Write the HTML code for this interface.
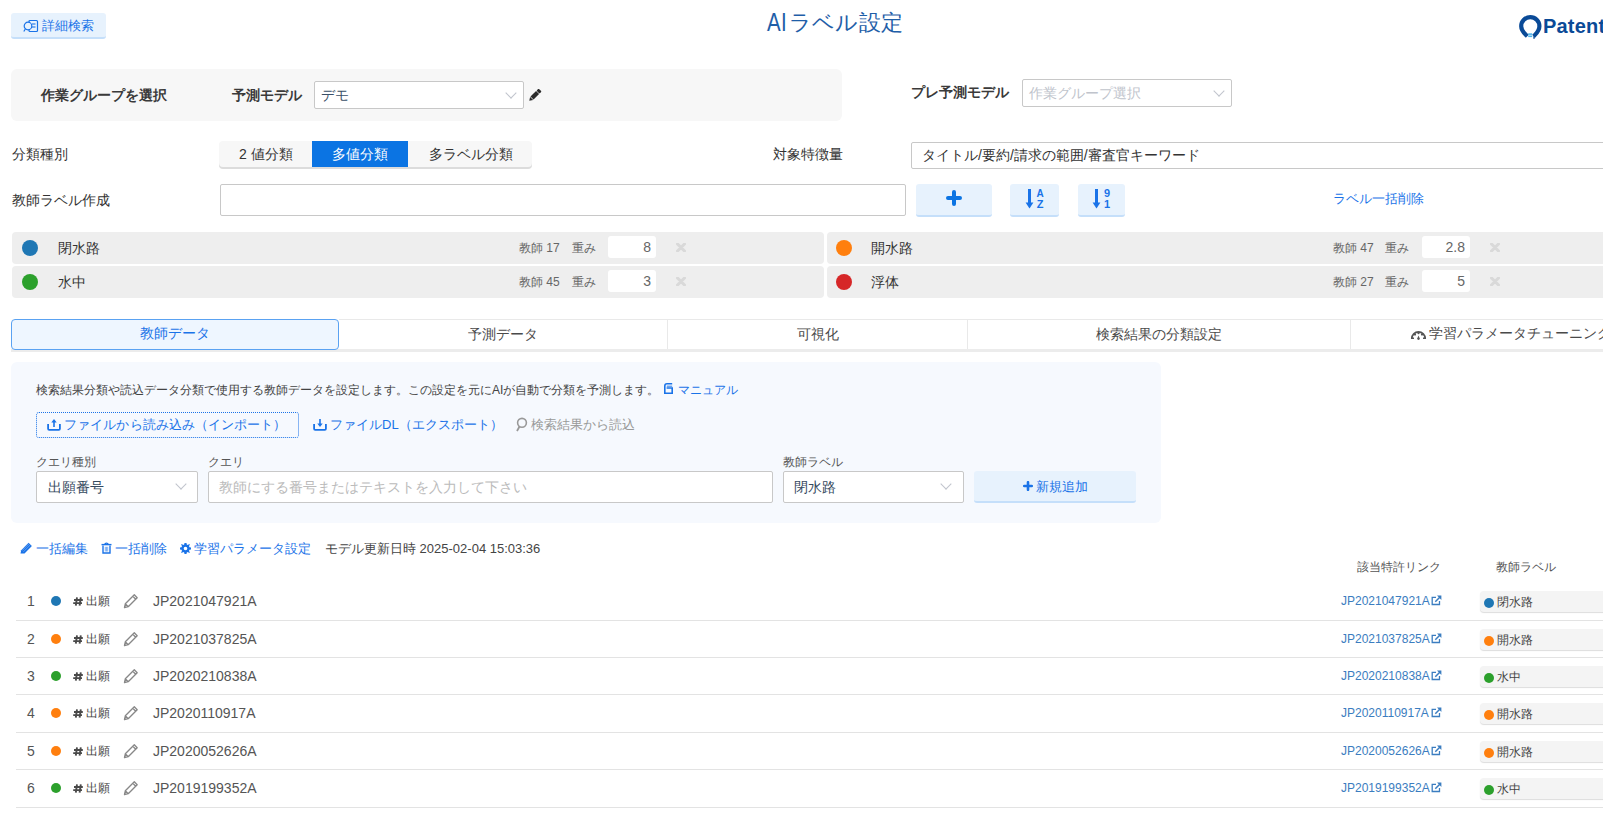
<!DOCTYPE html>
<html><head><meta charset="utf-8">
<style>
*{box-sizing:border-box;margin:0;padding:0}
html,body{width:1603px;height:815px;overflow:hidden;background:#fff}
body{position:relative;font-family:"Liberation Sans",sans-serif;font-size:14px;color:#333;line-height:1}
.a{position:absolute;white-space:nowrap}
.btnl{background:#e7f2fd;border-bottom:2px solid #c5dffa;border-radius:3px}
.sel{background:#fff;border:1px solid #c8c8c8;border-radius:2px}
.chev{position:absolute;width:8px;height:8px;border-right:1px solid #c0c4cc;border-bottom:1px solid #c0c4cc;transform:rotate(45deg)}
.card{position:absolute;height:31px;background:#eee;border-radius:4px}
.dot{position:absolute;border-radius:50%}
.blue{color:#1a73e8}
.tab{position:absolute;top:319px;height:30px;border-top:1px solid #e9e9e9;border-right:1px solid #e9e9e9;text-align:center;line-height:28px;color:#4a4a4a}
.row{position:absolute;left:16px;width:1600px;border-bottom:1px solid #e3e3e3}
</style></head><body>

<!-- top button -->
<div class="a btnl" style="left:11px;top:13px;width:95px;height:26px"></div>
<svg class="a" style="left:23px;top:19px" width="16" height="14" viewBox="0 0 16 14"><rect x="6" y="1.5" width="8.5" height="11" rx="1" fill="none" stroke="#1a73e8" stroke-width="1.2"/><line x1="9" y1="5" x2="12.5" y2="5" stroke="#1a73e8" stroke-width="1.1"/><line x1="9" y1="8" x2="12.5" y2="8" stroke="#1a73e8" stroke-width="1.1"/><circle cx="5" cy="7" r="3.8" fill="#e7f2fd" stroke="#1a73e8" stroke-width="1.2"/><line x1="2.3" y1="10" x2="0.8" y2="12.5" stroke="#1a73e8" stroke-width="1.2"/></svg>
<div class="a blue" style="left:42px;top:19px;font-size:13px">詳細検索</div>

<div class="a" style="left:767px;top:12px;font-size:22px;color:#1f5ea8;letter-spacing:0.4px"><span style="display:inline-block;transform:translateY(1px) scale(0.93,1.18);transform-origin:0 78%">AI</span>ラベル設定</div>

<!-- logo -->
<svg class="a" style="left:1510px;top:8px" width="36" height="36" viewBox="0 0 36 36"><path d="M17.3 28.3 C 14.5 25.5, 11.2 23, 11.2 18.2 A 9.1 9.1 0 1 1 29.4 18.2 C 29.4 23, 26.2 25.5, 23.6 28.3" fill="none" stroke="#0a4a97" stroke-width="4.2"/><rect x="18.2" y="25.3" width="4" height="1.6" fill="#4db3ea"/><rect x="18.2" y="27.5" width="4" height="1.6" fill="#4db3ea"/><path d="M24.2 27 L24 30.8" stroke="#0a4a97" stroke-width="1.4"/></svg>
<div class="a" style="left:1543px;top:16px;font-size:20px;font-weight:bold;color:#0a4a97;letter-spacing:0.2px">Patent</div>
<!-- panel 1 -->
<div class="a" style="left:11px;top:69px;width:831px;height:52px;background:#f7f7f7;border-radius:6px"></div>
<div class="a" style="left:41px;top:87.5px;font-weight:bold;color:#3a3a3a">作業グループを選択</div>
<div class="a" style="left:232px;top:87.5px;font-weight:bold;color:#3a3a3a">予測モデル</div>
<div class="a sel" style="left:314px;top:81px;width:210px;height:28px"></div>
<div class="a" style="left:321px;top:88px;color:#3a5068">デモ</div>
<div class="chev" style="left:507px;top:89px"></div>
<svg class="a" style="left:528px;top:88.5px" width="14" height="14" viewBox="0 0 15 15"><g transform="rotate(-45 7 7)" fill="#2b2b2b"><path d="M-1 7 L2.6 4.7 V9.3 Z"/><rect x="3.2" y="4.7" width="8.4" height="4.6"/><rect x="12.2" y="4.7" width="3.2" height="4.6" rx="1"/></g></svg>

<div class="a" style="left:911px;top:85px;font-weight:bold;color:#3a3a3a">プレ予測モデル</div>
<div class="a sel" style="left:1022px;top:79px;width:210px;height:28px"></div>
<div class="a" style="left:1029px;top:86px;color:#c0c4cc">作業グループ選択</div>
<div class="chev" style="left:1215px;top:87px"></div>

<!-- row 2 -->
<div class="a" style="left:12px;top:147px">分類種別</div>
<div class="a" style="left:219px;top:141px;width:313px;height:26px;background:#f7f7f7;border-radius:4px;box-shadow:0 2px 0 #dcdcdc"></div>
<div class="a" style="left:312px;top:141px;width:96px;height:26px;background:#0b74e3"></div>
<div class="a" style="left:239px;top:147px">2 値分類</div>
<div class="a" style="left:332px;top:147px;color:#fff">多値分類</div>
<div class="a" style="left:429px;top:147px">多ラベル分類</div>

<div class="a" style="left:773px;top:147px">対象特徴量</div>
<div class="a sel" style="left:911px;top:142px;width:720px;height:27px"></div>
<div class="a" style="left:922px;top:148px">タイトル/要約/請求の範囲/審査官キーワード</div>

<!-- row 3 -->
<div class="a" style="left:12px;top:193px">教師ラベル作成</div>
<div class="a sel" style="left:220px;top:184px;width:686px;height:32px"></div>
<div class="a btnl" style="left:916px;top:184px;width:76px;height:33px"></div>
<svg class="a" style="left:946px;top:190px" width="16" height="16" viewBox="0 0 16 16"><path d="M8 2 V14 M2 8 H14" stroke="#0b74e3" stroke-width="4" stroke-linecap="round"/></svg>
<div class="a btnl" style="left:1010px;top:184px;width:49px;height:33px"></div>
<svg class="a" style="left:1020px;top:186px" width="28" height="26" viewBox="0 0 28 26"><path d="M9.5 3 V19" stroke="#1a73e8" stroke-width="3"/><path d="M5.6 16.5 L9.5 22.5 L13.4 16.5 Z" fill="#1a73e8"/><text x="20" y="10.5" font-size="10" font-weight="bold" fill="#1a73e8" text-anchor="middle" font-family="Liberation Sans">A</text><text x="20" y="22" font-size="11" font-weight="bold" fill="#1a73e8" text-anchor="middle" font-family="Liberation Sans">Z</text></svg>
<div class="a btnl" style="left:1078px;top:184px;width:47px;height:33px"></div>
<svg class="a" style="left:1087px;top:186px" width="28" height="26" viewBox="0 0 28 26"><path d="M9.5 3 V19" stroke="#1a73e8" stroke-width="3"/><path d="M5.6 16.5 L9.5 22.5 L13.4 16.5 Z" fill="#1a73e8"/><text x="20" y="11" font-size="11" font-weight="bold" fill="#1a73e8" text-anchor="middle" font-family="Liberation Sans">9</text><text x="20" y="22" font-size="11" font-weight="bold" fill="#1a73e8" text-anchor="middle" font-family="Liberation Sans">1</text></svg>
<div class="a blue" style="left:1333px;top:191.5px;font-size:13px">ラベル一括削除</div>

<!-- label cards -->
<div class="card" style="left:12px;top:232px;width:812px;height:32px"></div>
<div class="card" style="left:12px;top:266px;width:812px;height:32px"></div>
<div class="card" style="left:827px;top:232px;width:812px;height:32px"></div>
<div class="card" style="left:827px;top:266px;width:812px;height:32px"></div>

<div class="dot" style="left:22px;top:240px;width:16px;height:16px;background:#1f77b4"></div>
<div class="a" style="left:58px;top:241px">閉水路</div>
<div class="dot" style="left:22px;top:274px;width:16px;height:16px;background:#2ca02c"></div>
<div class="a" style="left:58px;top:275px">水中</div>
<div class="dot" style="left:836px;top:240px;width:16px;height:16px;background:#ff7f0e"></div>
<div class="a" style="left:871px;top:241px">開水路</div>
<div class="dot" style="left:836px;top:274px;width:16px;height:16px;background:#d62728"></div>
<div class="a" style="left:871px;top:275px">浮体</div>

<div class="a" style="left:519px;top:242px;font-size:12px;color:#666">教師 17</div>
<div class="a" style="left:572px;top:242px;font-size:12px;color:#666">重み</div>
<div class="a" style="left:608px;top:236px;width:48px;height:22px;background:#fff;border-radius:3px;text-align:right;padding:4px 5px 0 0;color:#666">8</div>
<svg class="a" style="left:676px;top:243px" width="10" height="9" viewBox="0 0 10 9"><path d="M1.5 1 L8.5 8 M8.5 1 L1.5 8" stroke="#d9d9d9" stroke-width="3" stroke-linecap="round"/></svg>
<div class="a" style="left:519px;top:276px;font-size:12px;color:#666">教師 45</div>
<div class="a" style="left:572px;top:276px;font-size:12px;color:#666">重み</div>
<div class="a" style="left:608px;top:270px;width:48px;height:22px;background:#fff;border-radius:3px;text-align:right;padding:4px 5px 0 0;color:#666">3</div>
<svg class="a" style="left:676px;top:277px" width="10" height="9" viewBox="0 0 10 9"><path d="M1.5 1 L8.5 8 M8.5 1 L1.5 8" stroke="#d9d9d9" stroke-width="3" stroke-linecap="round"/></svg>

<div class="a" style="left:1333px;top:242px;font-size:12px;color:#666">教師 47</div>
<div class="a" style="left:1385px;top:242px;font-size:12px;color:#666">重み</div>
<div class="a" style="left:1422px;top:236px;width:48px;height:22px;background:#fff;border-radius:3px;text-align:right;padding:4px 5px 0 0;color:#666">2.8</div>
<svg class="a" style="left:1490px;top:243px" width="10" height="9" viewBox="0 0 10 9"><path d="M1.5 1 L8.5 8 M8.5 1 L1.5 8" stroke="#d9d9d9" stroke-width="3" stroke-linecap="round"/></svg>
<div class="a" style="left:1333px;top:276px;font-size:12px;color:#666">教師 27</div>
<div class="a" style="left:1385px;top:276px;font-size:12px;color:#666">重み</div>
<div class="a" style="left:1422px;top:270px;width:48px;height:22px;background:#fff;border-radius:3px;text-align:right;padding:4px 5px 0 0;color:#666">5</div>
<svg class="a" style="left:1490px;top:277px" width="10" height="9" viewBox="0 0 10 9"><path d="M1.5 1 L8.5 8 M8.5 1 L1.5 8" stroke="#d9d9d9" stroke-width="3" stroke-linecap="round"/></svg>

<!-- tabs -->
<div class="a" style="left:11px;top:349px;width:1600px;height:3px;background:#ececec"></div>
<div class="tab" style="left:339px;width:329px">予測データ</div>
<div class="tab" style="left:668px;width:300px">可視化</div>
<div class="tab" style="left:968px;width:383px">検索結果の分類設定</div>
<div class="tab" style="left:1351px;width:458px"></div>
<svg class="a" style="left:1410px;top:328px" width="17" height="12" viewBox="0 0 17 12"><path d="M1.8 10.5 A6.7 6.7 0 0 1 15.2 10.5" fill="none" stroke="#555" stroke-width="1.8"/><path d="M1 10.3 H4 M13 10.3 H16" stroke="#555" stroke-width="1.6"/><circle cx="8.5" cy="5.2" r="1.1" fill="#555"/><circle cx="5" cy="6.6" r="1.1" fill="#555"/><circle cx="12" cy="6.6" r="1.1" fill="#555"/><path d="M8.5 7.5 L7.2 10.6 A1.3 1.3 0 0 0 9.8 10.6 Z" fill="#555"/></svg>
<div class="a" style="left:1429px;top:326px;color:#4a4a4a">学習パラメータチューニング</div>
<div class="tab" style="left:11px;width:328px;background:#eef6ff;border:1px solid #5aa2f2;border-radius:4px;color:#1a73e8;line-height:27px;height:31px">教師データ</div>

<!-- content panel -->
<div class="a" style="left:11px;top:362px;width:1150px;height:161px;background:#f6f9fe;border-radius:6px"></div>
<div class="a" style="left:36px;top:384px;font-size:12px;color:#444">検索結果分類や読込データ分類で使用する教師データを設定します。この設定を元にAIが自動で分類を予測します。</div>
<div class="a blue" style="left:678px;top:384px;font-size:12px">マニュアル</div>
<svg class="a" style="left:47px;top:419px" width="14" height="12" viewBox="0 0 14 12"><path d="M1.1 5 V9.8 Q1.1 10.9 2.2 10.9 H11.8 Q12.9 10.9 12.9 9.8 V5" fill="none" stroke="#1a73e8" stroke-width="1.8"/><path d="M7 8 V3" stroke="#1a73e8" stroke-width="1.6"/><path d="M4.3 3.6 L7 0 L9.7 3.6 Z" fill="#1a73e8"/></svg>
<svg class="a" style="left:313px;top:419px" width="14" height="12" viewBox="0 0 14 12"><path d="M1.1 5 V9.8 Q1.1 10.9 2.2 10.9 H11.8 Q12.9 10.9 12.9 9.8 V5" fill="none" stroke="#1a73e8" stroke-width="1.8"/><path d="M7 0 V5" stroke="#1a73e8" stroke-width="1.6"/><path d="M4.3 4.5 L7 8 L9.7 4.5 Z" fill="#1a73e8"/></svg>
<svg class="a" style="left:515px;top:417px" width="13" height="15" viewBox="0 0 13 15"><circle cx="7" cy="5.8" r="4.4" fill="none" stroke="#999" stroke-width="1.6"/><path d="M4.5 9.5 L2 14" stroke="#999" stroke-width="1.8"/></svg>
<svg class="a" style="left:664px;top:383px" width="9" height="11" viewBox="0 0 9 11"><path d="M8.2 0.8 H3 C1.6 0.8 0.8 1.6 0.8 3 V10.2 H8.2 V5 H2.6" fill="none" stroke="#1a73e8" stroke-width="1.6"/><path d="M2.8 3.2 H8.2" stroke="#1a73e8" stroke-width="0.9"/></svg>

<div class="a" style="left:36px;top:412px;width:263px;height:26px;border:1px dotted #1a73e8;border-radius:3px"></div>
<div class="a blue" style="left:64.3px;top:418px;font-size:13px;letter-spacing:0.05px">ファイルから読み込み（インポート）</div>
<div class="a blue" style="left:330px;top:418px;font-size:13px">ファイルDL（エクスポート）</div>
<div class="a" style="left:531px;top:418px;font-size:13px;color:#999">検索結果から読込</div>

<div class="a" style="left:36px;top:456px;font-size:12px;color:#555">クエリ種別</div>
<div class="a" style="left:208px;top:456px;font-size:12px;color:#555">クエリ</div>
<div class="a" style="left:783px;top:456px;font-size:12px;color:#555">教師ラベル</div>
<div class="a sel" style="left:36px;top:471px;width:162px;height:32px"></div>
<div class="a" style="left:48px;top:480px;color:#34495e">出願番号</div>
<div class="chev" style="left:177px;top:480px"></div>
<div class="a sel" style="left:208px;top:471px;width:565px;height:32px"></div>
<div class="a" style="left:219px;top:480px;color:#bbb">教師にする番号またはテキストを入力して下さい</div>
<div class="a sel" style="left:783px;top:471px;width:181px;height:32px"></div>
<div class="a" style="left:794px;top:480px;color:#34495e">閉水路</div>
<div class="chev" style="left:942px;top:480px"></div>
<div class="a btnl" style="left:974px;top:471px;width:162px;height:32px"></div>
<svg class="a" style="left:1022.5px;top:481px" width="10" height="10" viewBox="0 0 10 10"><path d="M5 1.2 V8.8 M1.2 5 H8.8" stroke="#1a73e8" stroke-width="2.6" stroke-linecap="round"/></svg><div class="a blue" style="left:1036px;top:480px;font-size:13px">新規追加</div>

<!-- toolbar -->

<svg class="a" style="left:20px;top:542px" width="13" height="12" viewBox="0 0 13 12"><path d="M0.5 11.5 L1.2 8.2 L8.6 0.8 L11.9 4.1 L4.5 11.5 Z" fill="#1a73e8"/><path d="M2.2 8.6 L9.2 1.6 M3.4 9.8 L10.4 2.8" stroke="#fff" stroke-width="0.5" opacity="0.6"/></svg>
<svg class="a" style="left:101px;top:542px" width="11" height="12" viewBox="0 0 11 12"><path d="M2 3.5 V11 H9 V3.5" fill="none" stroke="#1a73e8" stroke-width="1.4"/><path d="M0.5 2.6 H10.5" stroke="#1a73e8" stroke-width="1.4"/><path d="M3.8 2.4 C3.8 0.6 7.2 0.6 7.2 2.4" fill="none" stroke="#1a73e8" stroke-width="1.2"/><path d="M4.3 4.8 V9.5 M5.5 4.8 V9.5 M6.7 4.8 V9.5" stroke="#1a73e8" stroke-width="0.8" opacity="0.7"/></svg>
<svg class="a" style="left:180.2px;top:542.7px" width="11" height="11" viewBox="0 0 12 12"><path fill="#1a73e8" fill-rule="evenodd" d="M4.9 0 H7.1 L7.4 1.7 L8.6 2.2 L10 1.2 L10.8 2 L9.8 3.4 L10.3 4.6 L12 4.9 V7.1 L10.3 7.4 L9.8 8.6 L10.8 10 L10 10.8 L8.6 9.8 L7.4 10.3 L7.1 12 H4.9 L4.6 10.3 L3.4 9.8 L2 10.8 L1.2 10 L2.2 8.6 L1.7 7.4 L0 7.1 V4.9 L1.7 4.6 L2.2 3.4 L1.2 2 L2 1.2 L3.4 2.2 L4.6 1.7 Z M6 4 A2 2 0 1 0 6 8 A2 2 0 1 0 6 4 Z"/></svg>
<div class="a blue" style="left:36px;top:542px;font-size:13px">一括編集</div>
<div class="a blue" style="left:115px;top:542px;font-size:13px">一括削除</div>
<div class="a blue" style="left:194px;top:542px;font-size:13px">学習パラメータ設定</div>
<div class="a" style="left:325px;top:542px;font-size:13px;color:#444">モデル更新日時 2025-02-04 15:03:36</div>

<div class="a" style="left:1357px;top:561px;font-size:12px;color:#555">該当特許リンク</div>
<div class="a" style="left:1496px;top:561px;font-size:12px;color:#555">教師ラベル</div>

<!-- rows -->
<div class="a" style="left:16px;top:620px;width:1600px;height:1px;background:#e3e3e3"></div>
<div class="a" style="left:27px;top:594px;color:#555">1</div>
<div class="dot" style="left:50.7px;top:595.6px;width:10.5px;height:10.5px;background:#1f77b4"></div>
<svg class="a" style="left:72.5px;top:597.0px" width="10" height="9" viewBox="0 0 10 9"><path d="M4 0.3 L2.8 8.7 M7.8 0.3 L6.6 8.7" stroke="#4a4a4a" stroke-width="1.9"/><path d="M1 3 H9.8 M0.2 6.2 H9" stroke="#4a4a4a" stroke-width="1.8"/></svg>
<div class="a" style="left:86px;top:595px;font-size:12px;color:#444">出願</div>
<svg class="a" style="left:123px;top:593px" width="16" height="16" viewBox="0 0 16 16"><path d="M1.5 14.5 L2.3 10.8 L11.3 1.8 L14.2 4.7 L5.2 13.7 Z M9.8 3.3 L12.7 6.2 M2.3 10.8 L5.2 13.7" fill="none" stroke="#888" stroke-width="1.3" stroke-linejoin="round"/></svg>
<div class="a" style="left:153px;top:594px;font-size:14px;color:#555">JP2021047921A</div>
<div class="a" style="left:1341px;top:595px;font-size:12px;color:#3b7dc0">JP2021047921A</div>
<svg class="a" style="left:1431px;top:595px" width="11" height="11" viewBox="0 0 11 11"><path d="M8.5 6 V9.5 H1.2 V2.3 H5" fill="none" stroke="#3b7dc0" stroke-width="1.3"/><path d="M6 0.6 H10.4 V5 Z" fill="#3b7dc0"/><path d="M4.3 6.7 L9 2" stroke="#3b7dc0" stroke-width="1.5"/></svg>
<div class="a" style="left:1480px;top:591px;width:130px;height:21px;background:#f4f4f4;border-radius:4px;box-shadow:0 1px 1px #ddd"></div>
<div class="dot" style="left:1484px;top:597.8px;width:10px;height:10px;background:#1f77b4"></div>
<div class="a" style="left:1497px;top:596px;font-size:12px;color:#444">閉水路</div>
<div class="a" style="left:16px;top:657px;width:1600px;height:1px;background:#e3e3e3"></div>
<div class="a" style="left:27px;top:632px;color:#555">2</div>
<div class="dot" style="left:50.7px;top:633.6px;width:10.5px;height:10.5px;background:#ff7f0e"></div>
<svg class="a" style="left:72.5px;top:635.0px" width="10" height="9" viewBox="0 0 10 9"><path d="M4 0.3 L2.8 8.7 M7.8 0.3 L6.6 8.7" stroke="#4a4a4a" stroke-width="1.9"/><path d="M1 3 H9.8 M0.2 6.2 H9" stroke="#4a4a4a" stroke-width="1.8"/></svg>
<div class="a" style="left:86px;top:633px;font-size:12px;color:#444">出願</div>
<svg class="a" style="left:123px;top:631px" width="16" height="16" viewBox="0 0 16 16"><path d="M1.5 14.5 L2.3 10.8 L11.3 1.8 L14.2 4.7 L5.2 13.7 Z M9.8 3.3 L12.7 6.2 M2.3 10.8 L5.2 13.7" fill="none" stroke="#888" stroke-width="1.3" stroke-linejoin="round"/></svg>
<div class="a" style="left:153px;top:632px;font-size:14px;color:#555">JP2021037825A</div>
<div class="a" style="left:1341px;top:633px;font-size:12px;color:#3b7dc0">JP2021037825A</div>
<svg class="a" style="left:1431px;top:633px" width="11" height="11" viewBox="0 0 11 11"><path d="M8.5 6 V9.5 H1.2 V2.3 H5" fill="none" stroke="#3b7dc0" stroke-width="1.3"/><path d="M6 0.6 H10.4 V5 Z" fill="#3b7dc0"/><path d="M4.3 6.7 L9 2" stroke="#3b7dc0" stroke-width="1.5"/></svg>
<div class="a" style="left:1480px;top:629px;width:130px;height:21px;background:#f4f4f4;border-radius:4px;box-shadow:0 1px 1px #ddd"></div>
<div class="dot" style="left:1484px;top:635.8px;width:10px;height:10px;background:#ff7f0e"></div>
<div class="a" style="left:1497px;top:634px;font-size:12px;color:#444">開水路</div>
<div class="a" style="left:16px;top:694px;width:1600px;height:1px;background:#e3e3e3"></div>
<div class="a" style="left:27px;top:669px;color:#555">3</div>
<div class="dot" style="left:50.7px;top:670.6px;width:10.5px;height:10.5px;background:#2ca02c"></div>
<svg class="a" style="left:72.5px;top:672.0px" width="10" height="9" viewBox="0 0 10 9"><path d="M4 0.3 L2.8 8.7 M7.8 0.3 L6.6 8.7" stroke="#4a4a4a" stroke-width="1.9"/><path d="M1 3 H9.8 M0.2 6.2 H9" stroke="#4a4a4a" stroke-width="1.8"/></svg>
<div class="a" style="left:86px;top:670px;font-size:12px;color:#444">出願</div>
<svg class="a" style="left:123px;top:668px" width="16" height="16" viewBox="0 0 16 16"><path d="M1.5 14.5 L2.3 10.8 L11.3 1.8 L14.2 4.7 L5.2 13.7 Z M9.8 3.3 L12.7 6.2 M2.3 10.8 L5.2 13.7" fill="none" stroke="#888" stroke-width="1.3" stroke-linejoin="round"/></svg>
<div class="a" style="left:153px;top:669px;font-size:14px;color:#555">JP2020210838A</div>
<div class="a" style="left:1341px;top:670px;font-size:12px;color:#3b7dc0">JP2020210838A</div>
<svg class="a" style="left:1431px;top:670px" width="11" height="11" viewBox="0 0 11 11"><path d="M8.5 6 V9.5 H1.2 V2.3 H5" fill="none" stroke="#3b7dc0" stroke-width="1.3"/><path d="M6 0.6 H10.4 V5 Z" fill="#3b7dc0"/><path d="M4.3 6.7 L9 2" stroke="#3b7dc0" stroke-width="1.5"/></svg>
<div class="a" style="left:1480px;top:666px;width:130px;height:21px;background:#f4f4f4;border-radius:4px;box-shadow:0 1px 1px #ddd"></div>
<div class="dot" style="left:1484px;top:672.8px;width:10px;height:10px;background:#2ca02c"></div>
<div class="a" style="left:1497px;top:671px;font-size:12px;color:#444">水中</div>
<div class="a" style="left:16px;top:732px;width:1600px;height:1px;background:#e3e3e3"></div>
<div class="a" style="left:27px;top:706px;color:#555">4</div>
<div class="dot" style="left:50.7px;top:707.6px;width:10.5px;height:10.5px;background:#ff7f0e"></div>
<svg class="a" style="left:72.5px;top:709.0px" width="10" height="9" viewBox="0 0 10 9"><path d="M4 0.3 L2.8 8.7 M7.8 0.3 L6.6 8.7" stroke="#4a4a4a" stroke-width="1.9"/><path d="M1 3 H9.8 M0.2 6.2 H9" stroke="#4a4a4a" stroke-width="1.8"/></svg>
<div class="a" style="left:86px;top:707px;font-size:12px;color:#444">出願</div>
<svg class="a" style="left:123px;top:705px" width="16" height="16" viewBox="0 0 16 16"><path d="M1.5 14.5 L2.3 10.8 L11.3 1.8 L14.2 4.7 L5.2 13.7 Z M9.8 3.3 L12.7 6.2 M2.3 10.8 L5.2 13.7" fill="none" stroke="#888" stroke-width="1.3" stroke-linejoin="round"/></svg>
<div class="a" style="left:153px;top:706px;font-size:14px;color:#555">JP2020110917A</div>
<div class="a" style="left:1341px;top:707px;font-size:12px;color:#3b7dc0">JP2020110917A</div>
<svg class="a" style="left:1431px;top:707px" width="11" height="11" viewBox="0 0 11 11"><path d="M8.5 6 V9.5 H1.2 V2.3 H5" fill="none" stroke="#3b7dc0" stroke-width="1.3"/><path d="M6 0.6 H10.4 V5 Z" fill="#3b7dc0"/><path d="M4.3 6.7 L9 2" stroke="#3b7dc0" stroke-width="1.5"/></svg>
<div class="a" style="left:1480px;top:703px;width:130px;height:21px;background:#f4f4f4;border-radius:4px;box-shadow:0 1px 1px #ddd"></div>
<div class="dot" style="left:1484px;top:709.8px;width:10px;height:10px;background:#ff7f0e"></div>
<div class="a" style="left:1497px;top:708px;font-size:12px;color:#444">開水路</div>
<div class="a" style="left:16px;top:769px;width:1600px;height:1px;background:#e3e3e3"></div>
<div class="a" style="left:27px;top:744px;color:#555">5</div>
<div class="dot" style="left:50.7px;top:745.6px;width:10.5px;height:10.5px;background:#ff7f0e"></div>
<svg class="a" style="left:72.5px;top:747.0px" width="10" height="9" viewBox="0 0 10 9"><path d="M4 0.3 L2.8 8.7 M7.8 0.3 L6.6 8.7" stroke="#4a4a4a" stroke-width="1.9"/><path d="M1 3 H9.8 M0.2 6.2 H9" stroke="#4a4a4a" stroke-width="1.8"/></svg>
<div class="a" style="left:86px;top:745px;font-size:12px;color:#444">出願</div>
<svg class="a" style="left:123px;top:743px" width="16" height="16" viewBox="0 0 16 16"><path d="M1.5 14.5 L2.3 10.8 L11.3 1.8 L14.2 4.7 L5.2 13.7 Z M9.8 3.3 L12.7 6.2 M2.3 10.8 L5.2 13.7" fill="none" stroke="#888" stroke-width="1.3" stroke-linejoin="round"/></svg>
<div class="a" style="left:153px;top:744px;font-size:14px;color:#555">JP2020052626A</div>
<div class="a" style="left:1341px;top:745px;font-size:12px;color:#3b7dc0">JP2020052626A</div>
<svg class="a" style="left:1431px;top:745px" width="11" height="11" viewBox="0 0 11 11"><path d="M8.5 6 V9.5 H1.2 V2.3 H5" fill="none" stroke="#3b7dc0" stroke-width="1.3"/><path d="M6 0.6 H10.4 V5 Z" fill="#3b7dc0"/><path d="M4.3 6.7 L9 2" stroke="#3b7dc0" stroke-width="1.5"/></svg>
<div class="a" style="left:1480px;top:741px;width:130px;height:21px;background:#f4f4f4;border-radius:4px;box-shadow:0 1px 1px #ddd"></div>
<div class="dot" style="left:1484px;top:747.8px;width:10px;height:10px;background:#ff7f0e"></div>
<div class="a" style="left:1497px;top:746px;font-size:12px;color:#444">開水路</div>
<div class="a" style="left:16px;top:807px;width:1600px;height:1px;background:#e3e3e3"></div>
<div class="a" style="left:27px;top:781px;color:#555">6</div>
<div class="dot" style="left:50.7px;top:782.6px;width:10.5px;height:10.5px;background:#2ca02c"></div>
<svg class="a" style="left:72.5px;top:784.0px" width="10" height="9" viewBox="0 0 10 9"><path d="M4 0.3 L2.8 8.7 M7.8 0.3 L6.6 8.7" stroke="#4a4a4a" stroke-width="1.9"/><path d="M1 3 H9.8 M0.2 6.2 H9" stroke="#4a4a4a" stroke-width="1.8"/></svg>
<div class="a" style="left:86px;top:782px;font-size:12px;color:#444">出願</div>
<svg class="a" style="left:123px;top:780px" width="16" height="16" viewBox="0 0 16 16"><path d="M1.5 14.5 L2.3 10.8 L11.3 1.8 L14.2 4.7 L5.2 13.7 Z M9.8 3.3 L12.7 6.2 M2.3 10.8 L5.2 13.7" fill="none" stroke="#888" stroke-width="1.3" stroke-linejoin="round"/></svg>
<div class="a" style="left:153px;top:781px;font-size:14px;color:#555">JP2019199352A</div>
<div class="a" style="left:1341px;top:782px;font-size:12px;color:#3b7dc0">JP2019199352A</div>
<svg class="a" style="left:1431px;top:782px" width="11" height="11" viewBox="0 0 11 11"><path d="M8.5 6 V9.5 H1.2 V2.3 H5" fill="none" stroke="#3b7dc0" stroke-width="1.3"/><path d="M6 0.6 H10.4 V5 Z" fill="#3b7dc0"/><path d="M4.3 6.7 L9 2" stroke="#3b7dc0" stroke-width="1.5"/></svg>
<div class="a" style="left:1480px;top:778px;width:130px;height:21px;background:#f4f4f4;border-radius:4px;box-shadow:0 1px 1px #ddd"></div>
<div class="dot" style="left:1484px;top:784.8px;width:10px;height:10px;background:#2ca02c"></div>
<div class="a" style="left:1497px;top:783px;font-size:12px;color:#444">水中</div>
</body></html>
